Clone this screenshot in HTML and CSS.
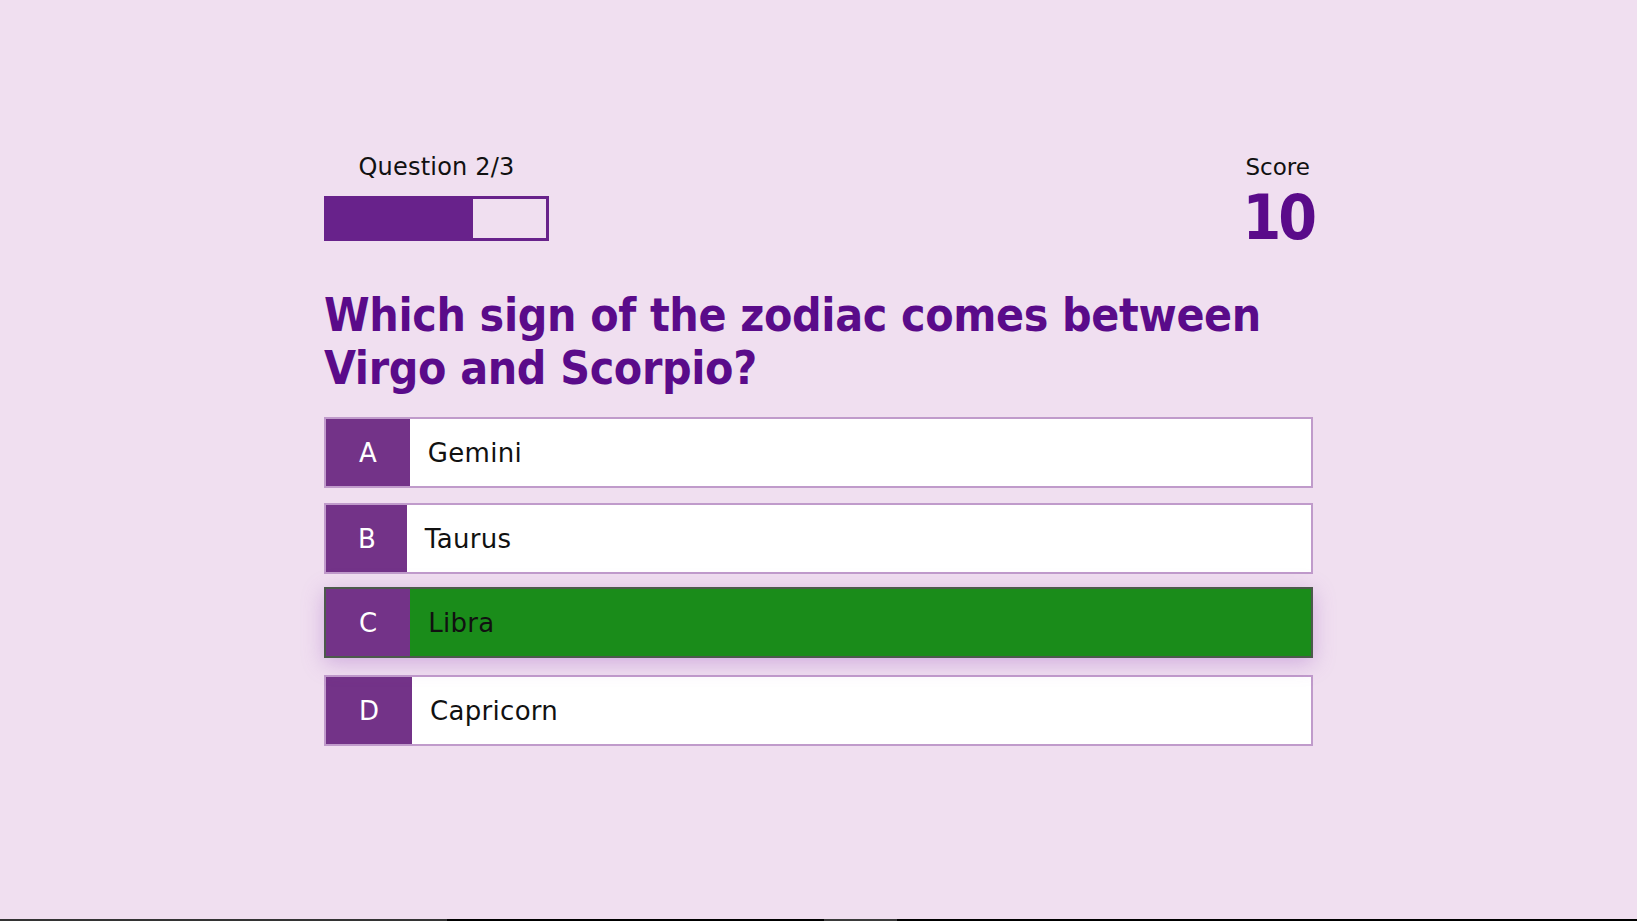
FILE: index.html
```html
<!DOCTYPE html>
<html lang="en">
<head>
<meta charset="utf-8">
<title>Zodiac Quiz</title>
<link rel="stylesheet" href="styles.css">
</head>
<body>
<main class="quiz">
  <header class="hud">
    <div class="hud-item">
      <p class="hud-label hud-label-wide">Question 2/3</p>
      <div class="progress"><div class="progress-fill" style="width: 66.67%"></div></div>
    </div>
    <div class="hud-item hud-score">
      <p class="hud-label">Score</p>
      <p class="score">10</p>
    </div>
  </header>
  <h1 class="question">Which sign of the zodiac comes between Virgo and Scorpio?</h1>
  <div class="choices">
    <div class="choice"><span class="prefix">A</span><span class="choice-text">Gemini</span></div>
    <div class="choice"><span class="prefix prefix-narrow">B</span><span class="choice-text">Taurus</span></div>
    <div class="choice correct"><span class="prefix">C</span><span class="choice-text">Libra</span></div>
    <div class="choice"><span class="prefix">D</span><span class="choice-text">Capricorn</span></div>
  </div>
</main>
<div class="bottom-strip"><span class="seg seg-a"></span><span class="seg seg-b"></span><span class="seg seg-c"></span><span class="seg seg-d"></span></div>
</body>
</html>
```
FILE: styles.css
```css
html, body {
  margin: 0;
  padding: 0;
  height: 100%;
  overflow: hidden;
}
body {
  background: #f0dff0;
  font-family: "DejaVu Sans", Verdana, sans-serif;
  color: #111;
}
.quiz {
  width: 989px;
  margin: 0 auto;
  padding-top: 153px;
}
.hud {
  display: flex;
  justify-content: space-between;
  align-items: flex-start;
}
.hud-item {
  display: flex;
  flex-direction: column;
  align-items: center;
}
.hud-label {
  margin: 0;
  font-size: 23px;
  line-height: 28px;
  color: #111;
}
.hud-label-wide {
  font-size: 24px;
  letter-spacing: 0.2px;
}
.progress {
  margin-top: 15px;
  width: 219px;
  height: 39px;
  border: 3px solid #68228b;
  background: transparent;
}
.progress-fill {
  height: 100%;
  background: #68228b;
}
.score {
  margin: 0 -1px 0 0;
  font-family: "DejaVu Sans Condensed", "DejaVu Sans", sans-serif;
  font-stretch: condensed;
  font-weight: bold;
  font-size: 62px;
  line-height: 73px;
  letter-spacing: -3px;
  color: #5a0b8a;
}
.question {
  margin: 35px 0 22px;
  font-family: "DejaVu Sans Condensed", "DejaVu Sans", sans-serif;
  font-stretch: condensed;
  font-weight: bold;
  font-size: 46px;
  line-height: 53px;
  letter-spacing: -0.35px;
  color: #5a0b8a;
}
.choices {
  display: flex;
  flex-direction: column;
  gap: 15px;
}
.choice {
  display: flex;
  height: 67px;
  border: 2px solid #c09bcb;
  background: #ffffff;
  font-size: 26px;
}
.prefix {
  display: flex;
  align-items: center;
  padding: 0 33px;
  background: #733388;
  color: #ffffff;
}
.prefix-narrow {
  padding: 0 31px 0 32px;
}
.choice-text {
  display: flex;
  align-items: center;
  padding-left: 18px;
  letter-spacing: 0.3px;
  color: #111;
}
.choice.correct {
  background: #1a8c1a;
  border-color: #4c5a4c;
  transform: translateY(-2px);
  box-shadow: 0 5px 20px rgba(150, 80, 190, 0.35);
}
.bottom-strip {
  position: fixed;
  left: 0;
  right: 0;
  bottom: 0;
  height: 2px;
  display: flex;
}
.seg { height: 100%; }
.seg-a { width: 447px; background: #333333; }
.seg-b { width: 377px; background: #000000; }
.seg-c { width: 73px; background: #3a3a3a; }
.seg-d { flex: 1; background: #000000; }
```
